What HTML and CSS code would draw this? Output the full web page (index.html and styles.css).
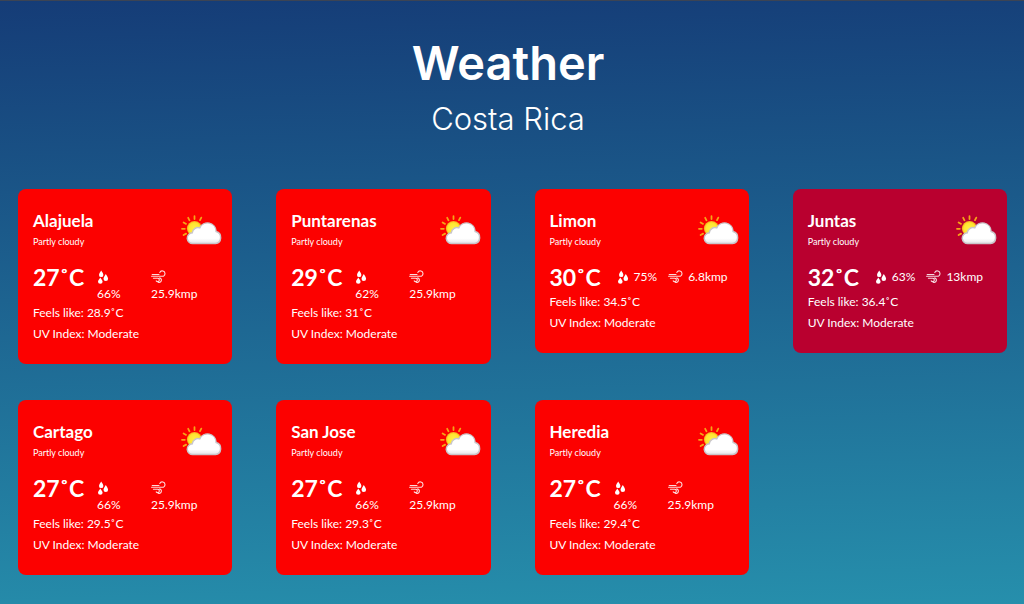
FILE: index.html
```html
<!DOCTYPE html>
<html lang="en">
<head>
<meta charset="utf-8">
<meta name="viewport" content="width=device-width, initial-scale=1">
<title>Weather - Costa Rica</title>
<link rel="stylesheet" href="styles.css">
<script src="cards.js" defer></script>
</head>
<body>
<svg class="sprite" aria-hidden="true">
  <defs>
    <linearGradient id="cloud-fill" x1="0" y1="0" x2="0" y2="1">
      <stop offset="0.75" stop-color="#ffffff"/>
      <stop offset="1" stop-color="#e4e4e8"/>
    </linearGradient>
    <radialGradient id="sun-fill">
      <stop offset="0" stop-color="#fff04a"/>
      <stop offset="0.75" stop-color="#ffe52e"/>
      <stop offset="1" stop-color="#f7a51c"/>
    </radialGradient>
  </defs>
  <symbol id="partly-cloudy" viewBox="0 0 42 30">
    <g stroke="#f5a516" stroke-width="1.8" stroke-linecap="round">
      <path d="M13.5 1.2v2.8M7.2 2.8l1.3 2.5M20.3 2.6l-1.3 2.5M2.6 7.4l2.5 1.5M1 13.8h2.800M2.600 20l2.500-1.400"/>
    </g>
    <circle cx="13.5" cy="13.6" r="7.6" fill="url(#sun-fill)"/>
    <path d="M12 28.600a5.400 5.400 0 0 1-.7-10.800 5.600 5.600 0 0 1 7.400-4.900 8.600 8.600 0 0 1 16.400 3.600 6.200 6.200 0 0 1-.7 12.100z" fill="url(#cloud-fill)" stroke="#c9c6ca" stroke-width="1.5"/>
  </symbol>
  <symbol id="drops" viewBox="0 0 12 14">
    <g fill="#fff">
      <path d="M4.200 .4C5.200 2 6.400 3.600 6.400 4.900a2.200 2.200 0 0 1-4.400 0C2 3.600 3.200 2 4.200 .4z"/>
      <path d="M8.800 4C9.800 5.600 11.100 7.400 11.100 8.800a2.300 2.300 0 0 1-4.600 0C6.500 7.400 7.800 5.600 8.800 4z"/>
      <path d="M3.300 7.600C4.300 9.200 5.600 10.600 5.600 11.700a2.300 2.100 0 0 1-4.600 0C1 10.600 2.300 9.200 3.300 7.600z"/>
    </g>
  </symbol>
  <symbol id="wind" viewBox="0 0 15 14">
    <g fill="none" stroke="#fff" stroke-opacity=".85" stroke-width="1.1" stroke-linecap="round">
      <path d="M1.200 4.500h6.800M.6 6.300h10.700a2.700 2.700 0 1 0-2.500-3.800M2.400 8.200h4.200a1.700 1.700 0 1 1-1.400 2.700M8.300 8h.7a2.200 2.200 0 1 1-1.800 4.200"/>
    </g>
  </symbol>
</svg>
<header class="page-header">
  <h1 class="title">Weather</h1>
  <p class="country">Costa Rica</p>
</header>
<main class="cards" id="cards"></main>
</body>
</html>
```

FILE: cards.js
```js
const stations = [
  { city: "Alajuela", temp: 27, humidity: 66, wind: 25.9, feels: 28.9 },
  { city: "Puntarenas", temp: 29, humidity: 62, wind: 25.9, feels: 31 },
  { city: "Limon", temp: 30, humidity: 75, wind: 6.8, feels: 34.5 },
  { city: "Juntas", temp: 32, humidity: 63, wind: 13, feels: 36.4 },
  { city: "Cartago", temp: 27, humidity: 66, wind: 25.9, feels: 29.5 },
  { city: "San Jose", temp: 27, humidity: 66, wind: 25.9, feels: 29.3 },
  { city: "Heredia", temp: 27, humidity: 66, wind: 25.9, feels: 29.4 }
];

const card = s => `
  <article class="card${s.temp > 30 ? " card-hot" : ""}">
    <div class="card-top">
      <div>
        <h2 class="city">${s.city}</h2>
        <p class="condition">Partly cloudy</p>
      </div>
      <svg class="condition-icon" aria-hidden="true"><use href="#partly-cloudy"/></svg>
    </div>
    <div class="readings${s.wind > 20 ? " readings-stacked" : ""}">
      <span class="temp">${s.temp}˚C</span>
      <span class="metric"><svg class="drops-icon" aria-hidden="true"><use href="#drops"/></svg><span>${s.humidity}%</span></span>
      <span class="metric"><svg class="wind-icon" aria-hidden="true"><use href="#wind"/></svg><span>${s.wind}kmp</span></span>
    </div>
    <p class="detail">Feels like: ${s.feels}˚C</p>
    <p class="detail">UV Index: Moderate</p>
  </article>`;

document.getElementById("cards").innerHTML = stations.map(card).join("");
```

FILE: styles.css
```css
* {
  box-sizing: border-box;
}

body {
  margin: 0;
  min-height: 100vh;
  border-top: 1px solid #3c4454;
  background: linear-gradient(178deg, #153c77, #268fac) no-repeat;
  color: #fff;
  font-family: Lato, "Liberation Sans", sans-serif;
}

h1,
h2,
p {
  margin: 0;
}

.sprite {
  position: absolute;
  width: 0;
  height: 0;
}

.page-header {
  padding: 34px 8px 50px 0;
  text-align: center;
  font-family: Inter, "Liberation Sans", sans-serif;
}

.title {
  font-size: 47px;
  line-height: 56px;
  font-weight: 600;
}

.country {
  margin-top: 8px;
  font-size: 31px;
  line-height: 40px;
  font-weight: 300;
}

.cards {
  display: grid;
  grid-template-columns: repeat(4, 1fr);
  align-items: start;
  gap: 36px 44px;
  padding: 0 17px 28px 18px;
}

.card {
  padding: 20px 9px 20px 15px;
  border-radius: 8px;
  background: #fc0100;
}

.card-hot {
  background: #b9002f;
}

.card-top {
  display: flex;
  justify-content: space-between;
  align-items: center;
  margin-bottom: 12px;
}

.city {
  font-size: 17px;
  line-height: 24px;
  font-weight: 700;
}

.condition {
  font-size: 9px;
  line-height: 18px;
}

.condition-icon {
  width: 42px;
  height: 30px;
}

.readings {
  display: flex;
  gap: 11px;
}

.temp {
  margin-right: 5px;
  font-size: 23px;
  line-height: 28px;
  font-weight: 700;
}

.metric {
  display: flex;
  align-items: center;
  gap: 5px;
  font-size: 12px;
  line-height: 16px;
}

.drops-icon {
  width: 12px;
  height: 14px;
}

.wind-icon {
  width: 15px;
  height: 14px;
}

.readings-stacked {
  display: grid;
  grid-template-columns: 64px 54px auto;
  gap: 0;
}

.readings-stacked .metric {
  flex-direction: column;
  align-items: flex-start;
  gap: 2px;
  padding-top: 7px;
}

.detail {
  font-size: 12px;
  line-height: 21px;
}
```
